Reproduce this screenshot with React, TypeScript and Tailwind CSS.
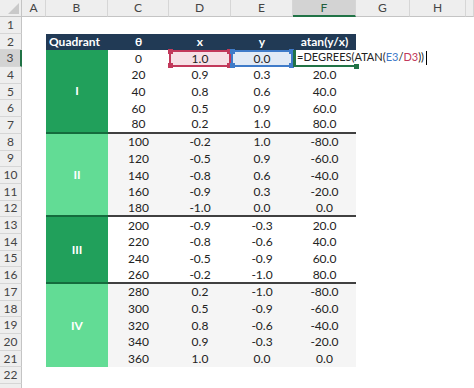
import React from 'react'

const COLS = ['A', 'B', 'C', 'D', 'E', 'F', 'G', 'H', '']

// theta, x, y, atan
const DATA: [string, string, string, string][] = [
  ['0', '1.0', '0.0', ''],
  ['20', '0.9', '0.3', '20.0'],
  ['40', '0.8', '0.6', '40.0'],
  ['60', '0.5', '0.9', '60.0'],
  ['80', '0.2', '1.0', '80.0'],
  ['100', '-0.2', '1.0', '-80.0'],
  ['120', '-0.5', '0.9', '-60.0'],
  ['140', '-0.8', '0.6', '-40.0'],
  ['160', '-0.9', '0.3', '-20.0'],
  ['180', '-1.0', '0.0', '0.0'],
  ['200', '-0.9', '-0.3', '20.0'],
  ['220', '-0.8', '-0.6', '40.0'],
  ['240', '-0.5', '-0.9', '60.0'],
  ['260', '-0.2', '-1.0', '80.0'],
  ['280', '0.2', '-1.0', '-80.0'],
  ['300', '0.5', '-0.9', '-60.0'],
  ['320', '0.8', '-0.6', '-40.0'],
  ['340', '0.9', '-0.3', '-20.0'],
  ['360', '1.0', '0.0', '0.0'],
]

// quadrant blocks: start row, span, label, dark?
const QUADS: Record<number, { span: string; label: string; dark: boolean }> = {
  3: { span: 'row-span-5', label: 'I', dark: true },
  8: { span: 'row-span-5', label: 'II', dark: false },
  13: { span: 'row-span-4', label: 'III', dark: true },
  17: { span: 'row-span-5', label: 'IV', dark: false },
}

const BAND_END = [7, 12, 16]
const GRAY_ROWS = (r: number) => (r >= 8 && r <= 12) || (r >= 17 && r <= 21)

function Handle({ pos, color }: { pos: string; color: string }) {
  return <span className={`absolute w-[5px] h-[5px] ${pos} ${color}`} />
}

function RowNum({ n }: { n?: number }) {
  const selected = n === 3
  return (
    <div
      className={`flex items-center justify-center text-[12px] text-[#444] border-b border-[#d6d6d6] ${
        selected ? 'bg-[#d3d3d3] border-r-2 border-r-[#217346]' : 'bg-[#eeeeee] border-r border-r-[#c4c4c4]'
      }`}
    >
      {n}
    </div>
  )
}

export default function App() {
  const rows: React.ReactNode[] = []

  // row 1
  rows.push(<RowNum key="n1" n={1} />)
  rows.push(<div key="r1" className="col-span-9 bg-white" />)

  // row 2: header
  rows.push(<RowNum key="n2" n={2} />)
  rows.push(<div key="a2" className="bg-white" />)
  rows.push(
    <div key="b2" className="bg-[#213a55] text-white font-bold text-[12px] flex items-center pl-[3px]">
      Quadrant
    </div>
  )
  ;['θ', 'x', 'y', 'atan(y/x)'].map((h) =>
    rows.push(
      <div key={'h' + h} className="bg-[#213a55] text-white font-bold text-[12px] flex items-center justify-center">
        {h}
      </div>
    )
  )
  rows.push(<div key="g2" className="col-span-3 bg-white" />)

  DATA.forEach(([t, x, y, a], i) => {
    const r = i + 3
    const end = BAND_END.includes(r)
    const bg = GRAY_ROWS(r) ? 'bg-[#f5f5f5]' : 'bg-white'
    const line = end ? 'border-b-2 border-b-[#404040]' : ''
    const cell = `flex items-center justify-center text-[12px] text-[#222] ${bg} ${line}`

    rows.push(<RowNum key={'n' + r} n={r} />)
    rows.push(<div key={'a' + r} className="bg-white" />)

    const q = QUADS[r]
    if (q) {
      const qEnd = r === 17 ? '' : 'border-b-2 border-b-[#146b3d]'
      rows.push(
        <div
          key={'q' + r}
          className={`${q.span} flex items-center justify-center text-white font-bold text-[12px] ${
            q.dark ? 'bg-[#21a05b]' : 'bg-[#62dc95]'
          } ${qEnd}`}
        >
          {q.label}
        </div>
      )
    }

    rows.push(
      <div key={'c' + r} className={cell}>
        {t}
      </div>
    )

    if (r === 3) {
      rows.push(
        <div key="d3" className="relative flex items-center justify-center text-[12px] text-[#222] bg-[#f6e1e6] border-2 border-[#c2395b]">
          {x}
          <Handle pos="-left-[3px] -top-[3px]" color="bg-[#c2395b]" />
          <Handle pos="-right-[3px] -top-[3px]" color="bg-[#c2395b]" />
          <Handle pos="-left-[3px] -bottom-[3px]" color="bg-[#c2395b]" />
          <Handle pos="-right-[3px] -bottom-[3px]" color="bg-[#c2395b]" />
        </div>
      )
      rows.push(
        <div key="e3" className="relative flex items-center justify-center text-[12px] text-[#222] bg-[#e1eaf6] border-2 border-[#3f7bc9]">
          {y}
          <Handle pos="-left-[3px] -top-[3px]" color="bg-[#3f7bc9]" />
          <Handle pos="-right-[3px] -top-[3px]" color="bg-[#3f7bc9]" />
          <Handle pos="-left-[3px] -bottom-[3px]" color="bg-[#3f7bc9]" />
          <Handle pos="-right-[3px] -bottom-[3px]" color="bg-[#3f7bc9]" />
        </div>
      )
      rows.push(
        <div key="f3" className="relative bg-white border-l-[3px] border-l-[#217346] border-b-2 border-b-[#217346]">
          <span className="absolute left-[1px] top-0 bottom-0 flex items-center whitespace-nowrap text-[11px] text-[#222] z-10">
            =DEGREES(ATAN(<span className="text-[#3f7bc9]">E3</span>/<span className="text-[#c2395b]">D3</span>))
            <span className="ml-[2px] inline-block w-px h-[14px] bg-black" />
          </span>
          <Handle pos="-right-[3px] -bottom-[4px]" color="bg-[#217346]" />
        </div>
      )
    } else {
      rows.push(
        <div key={'d' + r} className={cell}>
          {x}
        </div>
      )
      rows.push(
        <div key={'e' + r} className={cell}>
          {y}
        </div>
      )
      rows.push(
        <div key={'f' + r} className={cell}>
          {a}
        </div>
      )
    }
    rows.push(<div key={'g' + r} className="col-span-3 bg-white" />)
  })

  // row 22 and a sliver of 23
  rows.push(<RowNum key="n22" n={22} />)
  rows.push(<div key="r22" className="col-span-9 bg-white" />)
  rows.push(<RowNum key="n23" />)
  rows.push(<div key="r23" className="col-span-9 bg-white" />)

  return (
    <div
      className="w-[474px] h-[388px] overflow-hidden bg-white"
      style={{ fontFamily: 'Lato, "Open Sans", sans-serif' }}
    >
      <div className="grid grid-cols-[22px_24px_62px_61px_62px_62px_63px_54px_56px_1fr] grid-rows-[17px] auto-rows-[16.7px]">
        {/* Corner */}
        <div className="relative bg-[#eeeeee] border-r border-b border-[#c4c4c4]">
          <svg className="absolute right-[2px] bottom-[2px]" width="11" height="11" viewBox="0 0 11 11">
            <polygon points="11,0 11,11 0,11" fill="#c9c9c9" />
          </svg>
        </div>
        {COLS.map((c, i) => (
          <div
            key={'col' + i}
            className={`flex items-center justify-center text-[12px] border-r border-r-[#d6d6d6] ${
              c === 'F'
                ? 'bg-[#d3d3d3] text-[#215e3c] border-b-2 border-b-[#217346]'
                : 'bg-[#eeeeee] text-[#444] border-b border-b-[#c4c4c4]'
            }`}
          >
            {c}
          </div>
        ))}
        {rows}
      </div>
    </div>
  )
}
